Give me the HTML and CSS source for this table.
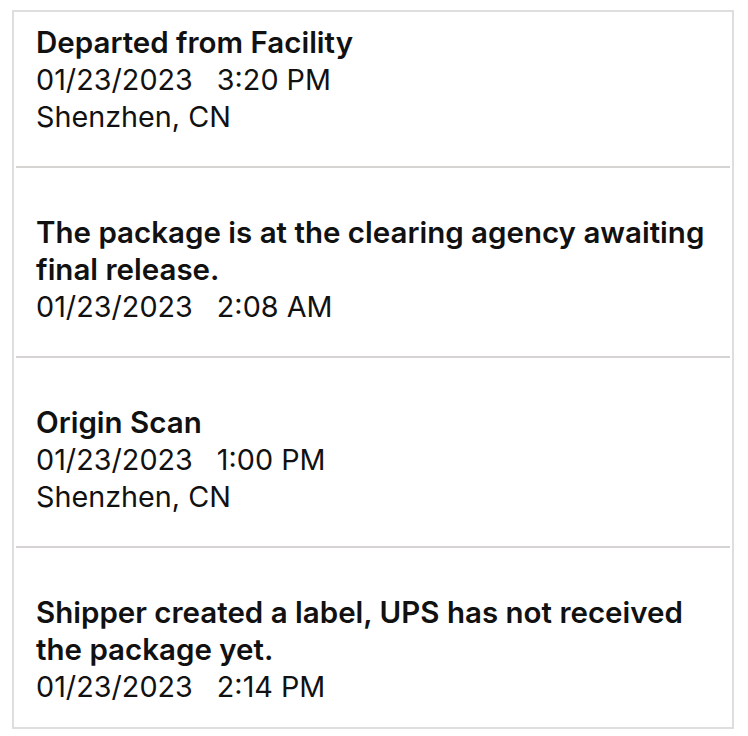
FILE: index.html
```html
<!DOCTYPE html>
<html lang="en">
<head>
<meta charset="utf-8">
<link rel="stylesheet" href="styles.css">
<title>Tracking</title>
</head>
<body>
<div class="card">
  <div class="event first">
    <div class="title">Departed from Facility</div>
    <div class="when"><span>01/23/2023</span><span class="time">3:20 PM</span></div>
    <div class="where">Shenzhen, CN</div>
  </div>
  <div class="event">
    <div class="title">The package is at the clearing agency awaiting final release.</div>
    <div class="when"><span>01/23/2023</span><span class="time">2:08 AM</span></div>
  </div>
  <div class="event">
    <div class="title">Origin Scan</div>
    <div class="when"><span>01/23/2023</span><span class="time">1:00 PM</span></div>
    <div class="where">Shenzhen, CN</div>
  </div>
  <div class="event last">
    <div class="title">Shipper created a label, UPS has not received the package yet.</div>
    <div class="when"><span>01/23/2023</span><span class="time">2:14 PM</span></div>
  </div>
</div>
</body>
</html>
```

FILE: styles.css
```css
* { box-sizing: border-box; }
html, body { margin: 0; padding: 0; background: #fff; }
body {
  font-family: Inter, "Noto Sans", sans-serif;
  color: #111;
  font-size: 28.75px;
  line-height: 37px;
}
.card {
  margin: 10px 0 0 12px;
  width: 722px;
  border: 2px solid #dedede;
}
.event {
  margin: 0 2px;
  padding: 46px 20px 31px 20px;
  border-bottom: 2px solid #d6d4d2;
}
.event.first { padding-top: 12px; }
.event.last { border-bottom: none; padding-bottom: 22px; }
.title { font-weight: 600; font-size: 29.5px; }
.time { margin-left: 24px; }
```
